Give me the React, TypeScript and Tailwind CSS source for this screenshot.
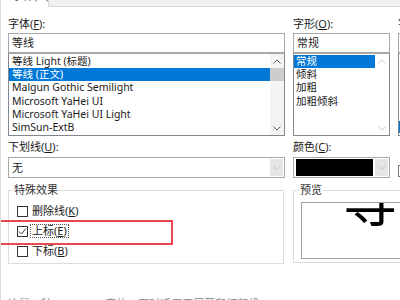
import React from "react";

const Up = ({ on = true }: { on?: boolean }) => (
  <svg width="8" height="5" viewBox="0 0 8 5" className="block">
    <path d="M0.5 4.5 L4 1 L7.5 4.5" fill="none" stroke={on ? "#606060" : "#c8c8c8"} strokeWidth="1" />
  </svg>
);

const Down = ({ on = true }: { on?: boolean }) => (
  <svg width="8" height="5" viewBox="0 0 8 5" className="block">
    <path d="M0.5 0.5 L4 4 L7.5 0.5" fill="none" stroke={on ? "#606060" : "#c8c8c8"} strokeWidth="1" />
  </svg>
);

// label with underlined access key, e.g. 字体(F):
function Label({ text, k }: { text: string; k: string }) {
  return (
    <div className="h-[13px] leading-[13px] text-[11px] text-[#1a1a1a] whitespace-nowrap">
      {text}(<span className="underline underline-offset-1">{k}</span>):
    </div>
  );
}

function Check({ label, k, checked = false, focus = false }: { label: string; k: string; checked?: boolean; focus?: boolean }) {
  return (
    <div className="flex items-center h-[20px]">
      <div className="w-[11px] h-[11px] border border-[#333] bg-white flex items-center justify-center">
        {checked && (
          <svg width="9" height="9" viewBox="0 0 9 9">
            <path d="M1 4.5 L3.5 7 L8 1.5" fill="none" stroke="#333" strokeWidth="1" />
          </svg>
        )}
      </div>
      <span
        className={
          "ml-[2px] px-[1px] leading-[12px] text-[11px] text-[#1a1a1a] whitespace-nowrap " +
          (focus ? "border border-dotted border-[#555]" : "border border-transparent")
        }
      >
        {label}(<span className="underline underline-offset-1">{k}</span>)
      </span>
    </div>
  );
}

const fonts = ["等线 Light (标题)", "等线 (正文)", "Malgun Gothic Semilight", "Microsoft YaHei UI", "Microsoft YaHei UI Light", "SimSun-ExtB"];
const styles = ["常规", "倾斜", "加粗", "加粗倾斜"];

export default function App() {
  return (
    <div className="relative w-[400px] h-[300px] overflow-hidden bg-white font-['Noto_Sans','Noto_Sans_CJK_SC',sans-serif] border-l border-[#d9d9d9]">
      {/* tab strip */}
      <div className="flex h-[7px]">
        <div className="relative w-[48px] bg-white border-r border-[#d4d4d4] overflow-hidden">
          <span className="absolute left-[11px] top-[-11px] text-[11px] leading-[13px] text-[#555] whitespace-nowrap">字体(N)</span>
        </div>
        <div className="flex-1 bg-[#f0f0f0] border-b border-[#d9d9d9]" />
      </div>

      <div className="pl-[7px]">
        {/* row 1 */}
        <div className="flex pt-[10px]">
          <div className="w-[277px] shrink-0">
            <Label text="字体" k="F" />
            <div className="mt-[3px] h-[20px] border border-[#a8a8a8] pl-[3px] text-[11px] leading-[18px] text-[#1a1a1a]">等线</div>
            <div className="flex h-[83px] border border-[#828790] border-t-[#a8a8a8]">
              <div className="flex-1 pt-[0.5px]">
                {fonts.map((f, i) => (
                  <div
                    key={f}
                    className={
                      "h-[13.4px] leading-[13.4px] pl-[3px] text-[10.5px] whitespace-nowrap " +
                      (i === 1 ? "bg-[#0078d7] text-white" : "text-[#1a1a1a]")
                    }
                  >
                    {f}
                  </div>
                ))}
              </div>
              <div className="w-[14px] flex flex-col items-center bg-[#f4f4f4]">
                <div className="h-[14px] flex items-center justify-center"><Up /></div>
                <div className="w-full h-[13px] bg-[#cdcdcd]" />
                <div className="flex-1" />
                <div className="h-[14px] flex items-center justify-center"><Down /></div>
              </div>
            </div>
          </div>

          <div className="ml-[8px] w-[97px] shrink-0">
            <Label text="字形" k="O" />
            <div className="mt-[3px] h-[20px] border border-[#a8a8a8] pl-[3px] text-[11px] leading-[18px] text-[#1a1a1a]">常规</div>
            <div className="flex h-[83px] border border-[#828790] border-t-[#a8a8a8]">
              <div className="flex-1 pt-[0.5px]">
                {styles.map((s, i) => (
                  <div
                    key={s}
                    className={
                      "h-[13.4px] leading-[13.4px] pl-[2px] text-[10.5px] whitespace-nowrap " +
                      (i === 0 ? "bg-[#0078d7] text-white" : "text-[#1a1a1a]")
                    }
                  >
                    {s}
                  </div>
                ))}
              </div>
              <div className="w-[14px] flex flex-col items-center">
                <div className="h-[14px] flex items-center justify-center"><Up on={false} /></div>
                <div className="flex-1" />
                <div className="h-[14px] flex items-center justify-center"><Down on={false} /></div>
              </div>
            </div>
          </div>

          <div className="ml-[8px] w-[60px] shrink-0">
            <Label text="字号" k="S" />
            <div className="mt-[3px] h-[20px] border border-[#a8a8a8]" />
            <div className="flex flex-col h-[83px] border border-[#828790] border-t-[#a8a8a8]">
              <div className="flex-1" />
              <div className="h-[12px] mb-[2px] bg-[#0078d7]" />
            </div>
          </div>
        </div>

        {/* row 2 */}
        <div className="flex mt-[4px]">
          <div className="w-[277px] shrink-0">
            <Label text="下划线" k="U" />
            <div className="mt-[4px] flex h-[21px] border border-[#a8a8a8]">
              <div className="flex-1 pl-[3px] text-[11px] leading-[19px] text-[#1a1a1a]">无</div>
              <div className="w-[13px] m-[1px] bg-[#e5e5e5] flex items-center justify-center"><Down on={false} /></div>
            </div>
          </div>
          <div className="ml-[8px] w-[97px] shrink-0">
            <Label text="颜色" k="C" />
            <div className="mt-[4px] flex h-[21px] border border-[#a8a8a8]">
              <div className="flex-1 m-[1px] ml-[2px] bg-black" />
              <div className="w-[13px] m-[1px] bg-[#e5e5e5] flex items-center justify-center"><Down on={false} /></div>
            </div>
          </div>
          <div className="ml-[8px] pt-[21px] shrink-0">
            <div className="mt-[4px] w-[12px] h-[12px] border border-[#7a7a7a]" />
          </div>
        </div>

        {/* row 3: groups */}
        <div className="flex mt-[12px]">
          <div className="relative w-[276px] h-[74px] shrink-0 border border-[#dcdcdc] pl-[8px] pt-[10px]">
            <span className="absolute left-[4px] top-[-8px] px-[1px] bg-white text-[11px] leading-[14px] text-[#333]">特殊效果</span>
            <Check label="删除线" k="K" />
            <Check label="上标" k="E" checked focus />
            <Check label="下标" k="B" />
          </div>
          <div className="relative ml-[9px] w-[130px] h-[73px] shrink-0 border border-[#dcdcdc] pt-[11px] pl-[7px]">
            <span className="absolute left-[5px] top-[-8px] px-[1px] bg-white text-[11px] leading-[14px] text-[#333]">预览</span>
            <div className="relative h-[57px] border border-[#a0a0a0] overflow-hidden">
              <span className="absolute left-[40px] top-[-34px] text-[56px] leading-[56px] text-black font-['Noto_Sans_CJK_SC',sans-serif] whitespace-nowrap">
                等线
              </span>
            </div>
          </div>
        </div>

        <div className="mt-[33px] text-[11px] leading-[13px] text-[#8a8a8a] whitespace-nowrap">
          这是一种 TrueType 字体，同时适用于屏幕和打印机。
        </div>
      </div>

      {/* red highlight drawn over the dialog */}
      <div className="absolute left-[-6px] top-[220px] w-[178px] h-[25px] border-2 border-[#e5484d]" />
    </div>
  );
}
